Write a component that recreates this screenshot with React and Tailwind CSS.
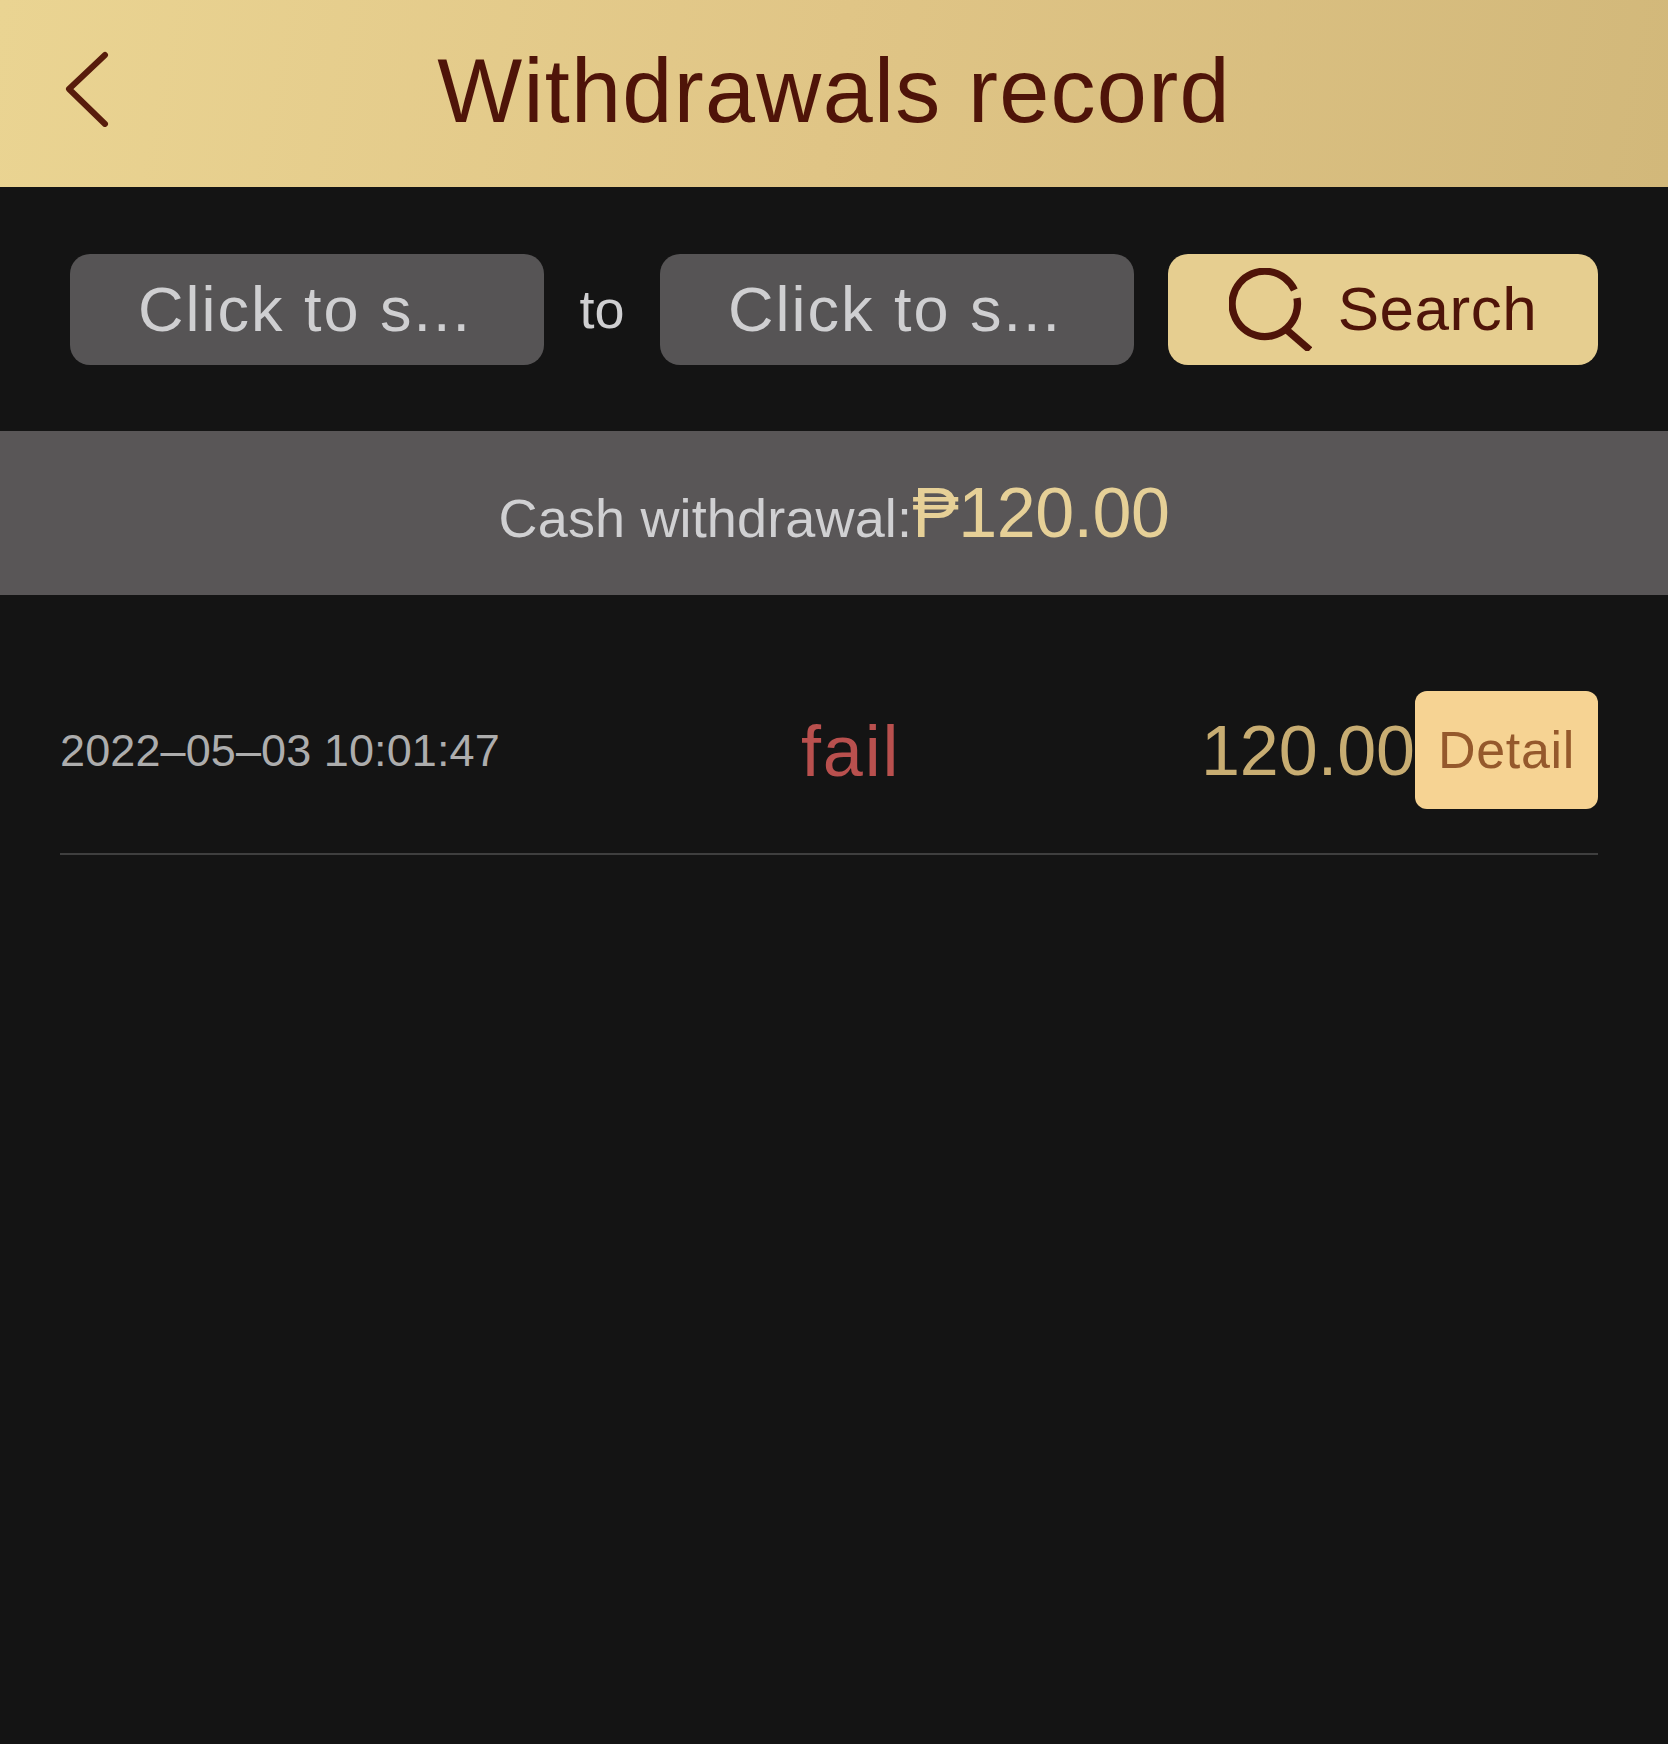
import React from 'react';

const FONT = "font-['Liberation_Sans',Arial,sans-serif]";

function DatePill() {
    return (
        <div className="flex h-[111px] w-[474px] shrink-0 items-center justify-center rounded-[20px] bg-[#565455] pr-[4px] text-[63px] leading-none tracking-[2px] text-[#cfcfd1]">
            Click to s...
        </div>
    );
}

export default function App() {
    return (
        <div className={`${FONT} flex min-h-[1744px] w-full flex-col bg-[#141414]`}>
            {/* Cabecera */}
            <header className="relative flex h-[187px] items-center justify-center bg-[linear-gradient(100deg,#ead492_0%,#e0c586_50%,#d2b87a_100%)] pb-[5px]">
                <svg className="absolute left-[64px] top-[51px]" width="48" height="76" viewBox="0 0 48 76" fill="none">
                    <path d="M41 4 L5 38 L41 73" stroke="#581c0c" strokeWidth="6" strokeLinecap="round" strokeLinejoin="round" />
                </svg>
                <h1 className="text-[90px] leading-none tracking-[1.3px] text-[#4f1409]">Withdrawals record</h1>
            </header>

            {/* Filtro */}
            <div className="flex h-[244px] items-center px-[70px]">
                <DatePill />
                <span className="w-[116px] text-center text-[54px] leading-none text-[#cfcfd1]">to</span>
                <DatePill />
                <button className="ml-[34px] flex h-[111px] w-[430px] items-center justify-center gap-[26px] rounded-[20px] bg-[#e6ce90] text-[62px] leading-none tracking-[0.5px] text-[#4f1409]">
                    <svg width="83" height="83" viewBox="0 0 80 80" fill="none">
                        <path d="M65.5 29 A31.5 31.5 0 1 1 63 21.2" stroke="#4f1409" strokeWidth="7" />
                        <path d="M56 60 L78 79" stroke="#4f1409" strokeWidth="7" />
                    </svg>
                    Search
                </button>
            </div>

            {/* Total */}
            <div className="flex h-[164px] items-center justify-center bg-[#595657]">
                <div className="flex items-baseline">
                    <span className="text-[54px] leading-none tracking-[0.15px] text-[#d0d0d2]">Cash withdrawal:</span>
                    <span className="text-[70px] leading-none tracking-[-0.5px] text-[#e6d097]">₱120.00</span>
                </div>
            </div>

            {/* Registros */}
            <div className="ml-[60px] mr-[70px] mt-[96px] flex h-[164px] items-start border-b-2 border-[#3f3f3f]">
                <span className="mt-[30px] w-[500px] text-[45px] leading-[60px] tracking-[0.1px] text-[#adadad]">2022–05–03 10:01:47</span>
                <span className="mt-[24px] w-[580px] pl-[241px] text-[72px] leading-none tracking-[1.8px] text-[#b9504e]">fail</span>
                <span className="mt-[25px] w-[275px] text-right text-[70px] leading-none text-[#c8ad72]">120.00</span>
                <div className="flex h-[118px] w-[183px] items-center justify-center rounded-[12px] bg-[#f6d393] text-[52px] leading-none tracking-[0.7px] text-[#95592c]">
                    Detail
                </div>
            </div>
        </div>
    );
}
